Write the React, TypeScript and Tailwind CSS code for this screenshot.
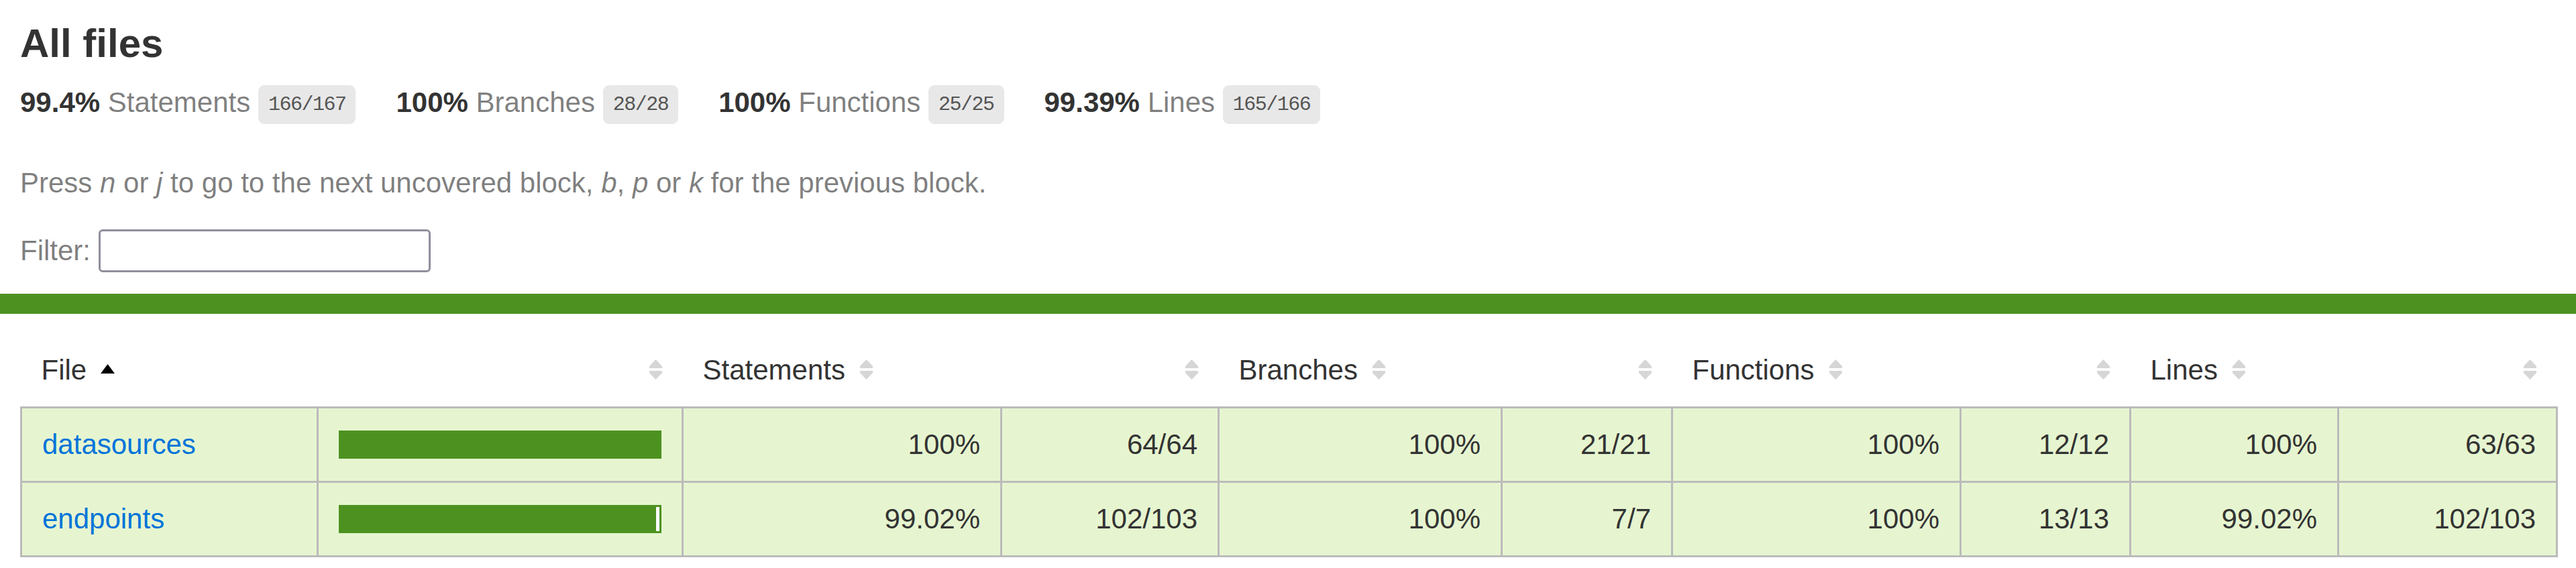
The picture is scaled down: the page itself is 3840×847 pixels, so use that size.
const stats = [
  { pct: '99.4%', label: 'Statements', frac: '166/167' },
  { pct: '100%', label: 'Branches', frac: '28/28' },
  { pct: '100%', label: 'Functions', frac: '25/25' },
  { pct: '99.39%', label: 'Lines', frac: '165/166' },
]

interface Row {
  file: string
  pic: number
  stmt: [string, string]
  branch: [string, string]
  fn: [string, string]
  lines: [string, string]
}

const rows: Row[] = [
  {
    file: 'datasources',
    pic: 100,
    stmt: ['100%', '64/64'],
    branch: ['100%', '21/21'],
    fn: ['100%', '12/12'],
    lines: ['100%', '63/63'],
  },
  {
    file: 'endpoints',
    pic: 99.02,
    stmt: ['99.02%', '102/103'],
    branch: ['100%', '7/7'],
    fn: ['100%', '13/13'],
    lines: ['99.02%', '102/103'],
  },
]

function Sorter({ sorted }: { sorted?: boolean }) {
  return (
    <span className="inline-block w-[21px] h-[30px] ml-[21px] align-baseline">
      {sorted ? (
        <svg width="21" height="30" viewBox="0 0 21 30">
          <polygon points="10.5,7 21,21 0,21" fill="#000" />
        </svg>
      ) : (
        <svg width="21" height="30" viewBox="0 0 21 30">
          <polygon points="10.5,0 20,10 20,13 1,13 1,10" fill="#d6d6d6" />
          <polygon points="1,17 20,17 20,20 10.5,30 1,20" fill="#d6d6d6" />
        </svg>
      )}
    </span>
  )
}

function Chart({ pct }: { pct: number }) {
  return (
    <div className="flex h-[42px] border-[3px] border-[#4d9221]">
      <div className="h-[36px] bg-[#4d9221]" style={{ width: `${pct}%` }} />
      <div className="h-[36px] bg-white" style={{ width: `${100 - pct}%` }} />
    </div>
  )
}

const cell = 'p-[30px] bg-[#e6f5d0] border-r-[3px] border-[#bbb]'
const num = 'p-[30px] bg-[#e6f5d0] border-r-[3px] border-[#bbb] text-right'

export default function App() {
  return (
    <div className="min-h-screen bg-white text-[#333] text-[42px] leading-[normal] font-['Liberation_Sans',Arial,sans-serif]">
      <div className="p-[30px]">
        <h1 className="text-[60px] font-bold leading-[normal] m-0">All files</h1>
        <div className="flex">
          {stats.map(s => (
            <div key={s.label} className="py-[30px] pr-[60px] whitespace-nowrap">
              <span className="font-bold">{s.pct} </span>
              <span className="text-black/50">{s.label}</span>{' '}
              <span className="align-middle px-[15px] py-[12px] rounded-[9px] bg-[#e8e8e8] text-[#555] text-[30px] tracking-[-1.5px] font-['Liberation_Mono',monospace]">
                {s.frac}
              </span>
            </div>
          ))}
        </div>
        <p className="my-[42px] text-black/50">
          Press <em>n</em> or <em>j</em> to go to the next uncovered block, <em>b</em>, <em>p</em> or <em>k</em> for the previous block.
        </p>
        <div className="flex items-center h-[69px] text-black/50">
          <span className="mr-[12px]">Filter:</span>
          <input
            type="search"
            className="w-[495px] h-[64px] border-[3px] border-[#8f8f9d] rounded-[6px] bg-white px-[6px] outline-none"
          />
        </div>
      </div>
      <div className="h-[30px] bg-[#4d9221]" />
      <div className="p-[30px]">
        <table className="w-full table-fixed border-collapse">
          <colgroup>
            <col className="w-[442px]" />
            <col className="w-[544px]" />
            <col className="w-[475px]" />
            <col className="w-[324px]" />
            <col className="w-[422px]" />
            <col className="w-[254px]" />
            <col className="w-[430px]" />
            <col className="w-[253px]" />
            <col className="w-[310px]" />
            <col className="w-[326px]" />
          </colgroup>
          <thead>
            <tr className="border-b-[3px] border-[#bbb]">
              <th className="p-[30px] text-left font-normal whitespace-nowrap">File<Sorter sorted /></th>
              <th className="p-[30px] text-right font-normal whitespace-nowrap"><Sorter /></th>
              <th className="p-[30px] text-left font-normal whitespace-nowrap">Statements<Sorter /></th>
              <th className="p-[30px] text-right font-normal whitespace-nowrap"><Sorter /></th>
              <th className="p-[30px] text-left font-normal whitespace-nowrap">Branches<Sorter /></th>
              <th className="p-[30px] text-right font-normal whitespace-nowrap"><Sorter /></th>
              <th className="p-[30px] text-left font-normal whitespace-nowrap">Functions<Sorter /></th>
              <th className="p-[30px] text-right font-normal whitespace-nowrap"><Sorter /></th>
              <th className="p-[30px] text-left font-normal whitespace-nowrap">Lines<Sorter /></th>
              <th className="p-[30px] text-right font-normal whitespace-nowrap"><Sorter /></th>
            </tr>
          </thead>
          <tbody className="border-[3px] border-[#bbb]">
            {rows.map(r => (
              <tr key={r.file} className="border-b-[3px] border-[#bbb]">
                <td className={cell + ' whitespace-nowrap'}>
                  <a href="#" className="text-[#0074d9] no-underline">{r.file}</a>
                </td>
                <td className={cell}>
                  <Chart pct={r.pic} />
                </td>
                <td className={num}>{r.stmt[0]}</td>
                <td className={num}>{r.stmt[1]}</td>
                <td className={num}>{r.branch[0]}</td>
                <td className={num}>{r.branch[1]}</td>
                <td className={num}>{r.fn[0]}</td>
                <td className={num}>{r.fn[1]}</td>
                <td className={num}>{r.lines[0]}</td>
                <td className="p-[30px] bg-[#e6f5d0] text-right">{r.lines[1]}</td>
              </tr>
            ))}
          </tbody>
        </table>
      </div>
    </div>
  )
}
